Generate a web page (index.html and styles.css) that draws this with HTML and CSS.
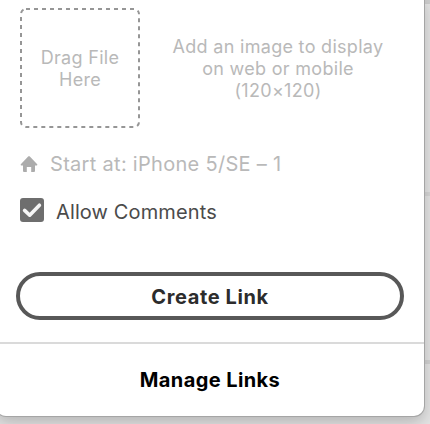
FILE: index.html
```
<!DOCTYPE html>
<html lang="en">
<head>
  <meta charset="UTF-8">
  <title>Share Link</title>
  <link rel="stylesheet" href="styles.css">
</head>
<body>
  <div class="panel">
    <div class="upload">
      <div class="dropzone">
        <svg class="outline" width="120" height="120" viewBox="0 0 120 120">
          <rect x="1" y="1" width="118" height="118" rx="5" />
        </svg>
        <span>Drag File<br>Here</span>
      </div>
      <p class="hint">Add an image to display<br>on web or mobile<br><span class="size">(120×120)</span></p>
    </div>

    <div class="start">
      <svg width="18" height="16" viewBox="0 0 18 16">
        <path d="M8.4.3Q9 0 9.6.3L17.2 8.2Q17.8 9.3 16.8 9.4H15V15Q15 16 14 16H11.2V11H6.8V16H4Q3 16 3 15V9.4H1.2Q.2 9.3.8 8.2Z" />
      </svg>
      <span>Start at: iPhone 5/SE – 1</span>
    </div>

    <div class="comments">
      <svg width="24" height="24" viewBox="0 0 24 24">
        <rect width="24" height="24" rx="3" />
        <path d="M4.6 12.4L9.7 17.2L19.4 7.2" />
      </svg>
      <span>Allow Comments</span>
    </div>

    <button class="create" type="button"><span>Create Link</span></button>

    <div class="footer"><a class="manage">Manage Links</a></div>
  </div>
</body>
</html>
```

FILE: styles.css
```
* {
  box-sizing: border-box;
}
body {
  margin: 0;
  height: 424px;
  overflow: hidden;
  font-family: Inter, "Liberation Sans", sans-serif;
  background: linear-gradient(#cdcdcd 0 4px, #e4e4e4 4px 192px, #d6d6d6 192px 196px, #e4e4e4 196px 360px, #d2d2d2 360px 364px, #e4e4e4 364px);
}
.panel {
  width: 428px;
  height: 420px;
  margin: -4px 0 0 -4px;
  padding-top: 12px;
  background: #fff;
  border-radius: 0 0 10px 10px;
  box-shadow: 0 0 0 1px #a5a5a5, 0 6px 16px rgba(0,0,0,0.22);
}
.upload {
  display: flex;
  padding-left: 24px;
  color: #b9b9b9;
  font-size: 18px;
  line-height: 22px;
  letter-spacing: 0.3px;
  text-align: center;
}
.dropzone {
  position: relative;
  width: 120px;
  height: 120px;
  padding-top: 2px;
  display: flex;
  align-items: center;
  justify-content: center;
}
.outline {
  position: absolute;
  top: 0;
  left: 0;
}
.outline rect {
  fill: none;
  stroke: #969696;
  stroke-width: 2;
  stroke-dasharray: 4 4;
}
.hint {
  width: 276px;
  margin: 28px 0 0;
}
.start {
  display: flex;
  align-items: center;
  height: 24px;
  margin: 24px 0 0 24px;
  gap: 12px;
  color: #b9b9b9;
  font-size: 20px;
  letter-spacing: 0.3px;
}
.start svg {
  fill: #acacac;
}
.comments {
  display: flex;
  align-items: center;
  height: 24px;
  margin: 22px 0 0 24px;
  gap: 12px;
  color: #4b4b4b;
  font-size: 20px;
  letter-spacing: 0.12px;
}
.comments span {
  padding-top: 3px;
}
.comments rect {
  fill: #6e6e6e;
}
.comments path {
  fill: none;
  stroke: #f5f5f5;
  stroke-width: 3.6;
  stroke-linecap: round;
  stroke-linejoin: round;
}
.create {
  display: block;
  width: 388px;
  height: 48px;
  margin: 50px 0 0 20px;
  padding: 2px 0 0;
  background: #fff;
  border: 4px solid #585858;
  border-radius: 24px;
  color: #2c2c2c;
  font-family: inherit;
  font-size: 20px;
  font-weight: 700;
  letter-spacing: 0.6px;
}
.footer {
  display: flex;
  align-items: center;
  justify-content: center;
  height: 74px;
  margin-top: 22px;
  border-top: 2px solid #dadada;
}
.manage {
  color: #000;
  font-size: 20px;
  font-weight: 700;
  letter-spacing: 0.4px;
}
```
